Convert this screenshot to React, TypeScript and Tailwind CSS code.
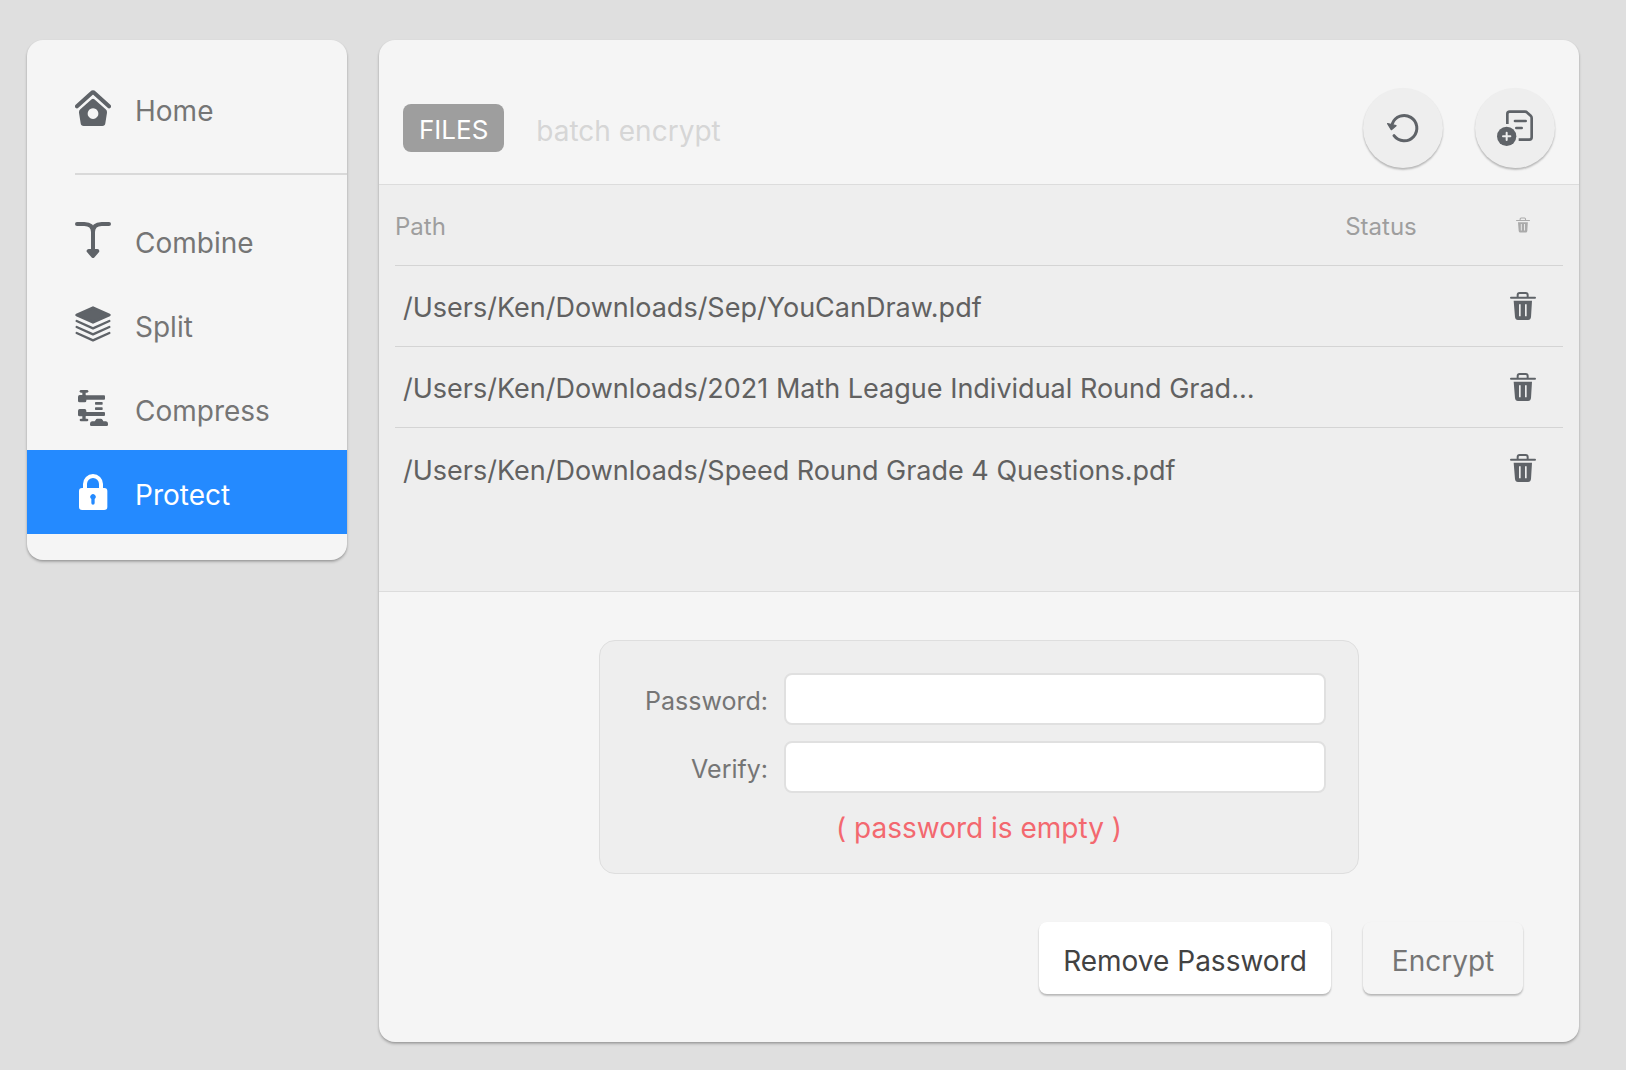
import React, { useState } from 'react';

type IconProps = { className?: string };

const HomeIcon: React.FC<IconProps> = ({ className }) => (
  <svg viewBox="0 0 108 108" className={className} fill="currentColor" aria-hidden="true">
    <path d="M6 49 L50 9 Q54 5 58 9 L102 49" fill="none" stroke="currentColor" strokeWidth="12" strokeLinecap="round" />
    <path fillRule="evenodd" d="M50 28 Q54 24 58 28 L92 58 Q97 62 96 68 L91 100 Q90 108 82 108 H26 Q18 108 17 100 L12 68 Q11 62 16 58 Z M54 55 a16 16 0 1 0 0.1 0 Z" />
  </svg>
);

const CombineIcon: React.FC<IconProps> = ({ className }) => (
  <svg viewBox="0 0 108 108" className={className} fill="none" stroke="currentColor" strokeLinecap="round" strokeLinejoin="round" aria-hidden="true">
    <path d="M6 6 H28 C44 6 54 14 54 30 V86 M102 6 H80 C64 6 54 14 54 30" strokeWidth="12" />
    <path d="M41 87 H67 L54 102 Z" fill="currentColor" strokeWidth="12" />
  </svg>
);

const SplitIcon: React.FC<IconProps> = ({ className }) => (
  <svg viewBox="0 0 108 108" className={className} fill="none" stroke="currentColor" strokeLinecap="round" strokeLinejoin="round" aria-hidden="true">
    <path d="M54 5 L103 27 L54 49 L5 27 Z" fill="currentColor" strokeWidth="8" />
    <path d="M5 45 L54 67 L103 45 M5 63 L54 85 L103 63 M5 81 L54 103 L103 81" strokeWidth="7" />
  </svg>
);

const CompressIcon: React.FC<IconProps> = ({ className }) => (
  <svg viewBox="0 0 108 108" className={className} fill="currentColor" aria-hidden="true">
    <rect x="14" y="0" width="26" height="8" rx="4" />
    <rect x="22" y="4" width="10" height="16" />
    <rect x="9" y="15" width="25" height="22" rx="5" />
    <rect x="26" y="16" width="64" height="13" rx="3" />
    <rect x="60" y="36" width="23" height="8" rx="2" />
    <rect x="60" y="52" width="23" height="8" rx="2" />
    <rect x="9" y="57" width="25" height="22" rx="5" />
    <rect x="26" y="66" width="64" height="12" rx="3" />
    <rect x="22" y="76" width="10" height="14" />
    <rect x="14" y="86" width="26" height="8" rx="4" />
    <path d="M62 90 Q63 86 67 86 H77 Q81 86 83 90 L85 94 H93 Q99 95 99 101 V104 Q99 108 95 108 H49 Q45 108 45 104 V101 Q45 95 51 94 H59 Z" />
  </svg>
);

const LockIcon: React.FC<IconProps> = ({ className }) => (
  <svg viewBox="0 0 108 108" className={className} fill="currentColor" aria-hidden="true">
    <path d="M30 46 V30 A24 24 0 0 1 78 30 V46" fill="none" stroke="currentColor" strokeWidth="12" />
    <path fillRule="evenodd" d="M21 42 H88 Q97 42 97 51 V99 Q97 108 88 108 H21 Q12 108 12 99 V51 Q12 42 21 42 Z M49 75 V87 Q49 92 54 92 Q59 92 59 87 V75 A8 8 0 1 0 49 75 Z" />
  </svg>
);

const ResetIcon: React.FC<IconProps> = ({ className }) => (
  <svg viewBox="0 0 108 108" className={className} fill="none" stroke="currentColor" aria-hidden="true">
    <path d="M22 41 A38 38 0 1 1 27 77" strokeWidth="9" strokeLinecap="round" />
    <path d="M8 41 L33 47 L19 59 Z" fill="currentColor" strokeWidth="4" strokeLinejoin="round" />
  </svg>
);

const AddFileIcon: React.FC<IconProps> = ({ className }) => (
  <svg viewBox="0 0 108 108" className={className} fill="none" stroke="currentColor" strokeWidth="8" aria-hidden="true">
    <path d="M31 42 V12 Q31 5 38 5 H84 Q88 5 91 8 L101 17 Q104 20 104 24 V82 Q104 89 97 89 H65" />
    <path d="M54 33 H86 M58 54 H74" strokeLinecap="round" />
    <circle cx="29" cy="79" r="29" fill="currentColor" stroke="none" />
    <path d="M18 79 H40 M29 68 V90" stroke="#eeeeee" strokeWidth="6" strokeLinecap="round" />
  </svg>
);

const TrashIcon: React.FC<IconProps> = ({ className }) => (
  <svg viewBox="0 0 78 84" className={className} fill="currentColor" aria-hidden="true">
    <path d="M23 17 V9 Q23 3 29 3 H47 Q53 3 53 9 V17 M3 17 H75" fill="none" stroke="currentColor" strokeWidth="6" strokeLinecap="round" />
    <path fillRule="evenodd" d="M11 26 H66 L63 75 Q62 84 54 84 H24 Q16 84 15 75 Z M27 37 V73 H32 V37 Z M45 37 V73 H50 V37 Z" />
  </svg>
);

const tools = [
  { name: 'Combine', icon: CombineIcon },
  { name: 'Split', icon: SplitIcon },
  { name: 'Compress', icon: CompressIcon },
  { name: 'Protect', icon: LockIcon },
];

const initialFiles = [
  '/Users/Ken/Downloads/Sep/YouCanDraw.pdf',
  '/Users/Ken/Downloads/2021 Math League Individual Round Grad…',
  '/Users/Ken/Downloads/Speed Round Grade 4 Questions.pdf',
];

const Sidebar: React.FC<{ active: string; onSelect: (name: string) => void }> = ({ active, onSelect }) => {
  const item = (name: string, Icon: React.FC<IconProps>) => (
    <button
      key={name}
      type="button"
      onClick={() => onSelect(name)}
      className={
        name === active
          ? 'flex h-21 w-full items-center gap-6 bg-[#248aff] pl-12 text-left text-white'
          : 'flex h-21 w-full items-center gap-6 pl-12 text-left text-[#5f6368]'
      }
    >
      <Icon className="size-9" />
      <span className={name === active ? 'pt-1.5' : 'pt-1.5 text-[#757575]'}>{name}</span>
    </button>
  );

  return (
    <nav className="w-80 shrink-0 overflow-hidden rounded-2xl bg-[#f5f5f5] py-[26px] text-[28px] shadow-[0_2px_3px_rgba(0,0,0,0.22),0_1px_2px_rgba(0,0,0,0.12)]">
      {item('Home', HomeIcon)}
      <hr className="my-[23px] ml-12 border-t-2 border-[#d9d9d9]" />
      {tools.map((tool) => item(tool.name, tool.icon))}
    </nav>
  );
};

const App: React.FC = () => {
  const [active, setActive] = useState('Protect');
  const [files, setFiles] = useState(initialFiles);
  const [password, setPassword] = useState('');
  const [verify, setVerify] = useState('');

  let message = '';
  if (!password) message = '( password is empty )';
  else if (password !== verify) message = '( passwords do not match )';

  return (
    <div className="flex min-h-screen items-start gap-8 bg-[#dfdfdf] pt-10 pr-[47px] pb-7 pl-[27px] font-['Inter','Liberation_Sans',sans-serif]">
      <Sidebar active={active} onSelect={setActive} />

      <main className="min-w-0 flex-1 rounded-2xl bg-[#f5f5f5] shadow-[0_2px_3px_rgba(0,0,0,0.22),0_1px_2px_rgba(0,0,0,0.12)]">
        {/* Title bar */}
        <header className="flex items-center px-6 pt-12 pb-4">
          <h1 className="flex h-12 items-center rounded-lg bg-[#9e9e9e] px-4 pt-0.5 text-[26px] text-white">FILES</h1>
          <p className="ml-8 pt-1.5 text-[28px] text-[#d6d6d6]">batch encrypt</p>
          <div className="ml-auto flex gap-8 text-[#5f6368]">
            <button
              type="button"
              aria-label="Reset"
              onClick={() => setFiles(initialFiles)}
              className="flex size-20 items-center justify-center rounded-full bg-[#eeeeee] shadow-[0_2px_2px_rgba(0,0,0,0.2),0_1px_2px_rgba(0,0,0,0.08)]"
            >
              <ResetIcon className="size-9" />
            </button>
            <button
              type="button"
              aria-label="Add files"
              className="flex size-20 items-center justify-center rounded-full bg-[#eeeeee] shadow-[0_2px_2px_rgba(0,0,0,0.2),0_1px_2px_rgba(0,0,0,0.08)]"
            >
              <AddFileIcon className="size-9" />
            </button>
          </div>
        </header>

        {/* File list */}
        <section className="min-h-[408px] border-y border-[#dcdcdc] bg-[#eeeeee] px-4">
          <table className="w-full table-fixed border-collapse">
            <thead>
              <tr className="h-20 border-b border-[#d4d4d4] text-2xl text-[#9e9e9e]">
                <th scope="col" className="pt-1 text-left font-normal">Path</th>
                <th scope="col" className="w-[204px] pt-1 text-center font-normal">Status</th>
                <th scope="col" className="w-20">
                  <button type="button" aria-label="Remove all" onClick={() => setFiles([])} className="block w-full text-[#aaaaaa]">
                    <TrashIcon className="mx-auto h-4 w-[14px]" />
                  </button>
                </th>
              </tr>
            </thead>
            <tbody>
              {files.map((file) => (
                <tr key={file} className="h-[81px] border-b border-[#d4d4d4] last:border-b-0">
                  <td className="truncate pt-1.5 pl-2 text-[27px] text-[#616161]">{file}</td>
                  <td />
                  <td>
                    <button
                      type="button"
                      aria-label={`Remove ${file}`}
                      onClick={() => setFiles(files.filter((f) => f !== file))}
                      className="block w-full text-[#5f6368]"
                    >
                      <TrashIcon className="mx-auto h-7 w-[26px]" />
                    </button>
                  </td>
                </tr>
              ))}
            </tbody>
          </table>
        </section>

        {/* Password form */}
        <form className="px-14 pt-12 pb-12" onSubmit={(e) => e.preventDefault()}>
          <div className="mx-auto max-w-[760px] rounded-2xl border border-[#dedede] bg-[#eeeeee] px-8 pt-8 pb-6">
            <div className="grid grid-cols-[136px_1fr] items-center gap-4 text-[25px] text-[#757575]">
              <label htmlFor="password" className="pt-1.5 text-right">Password:</label>
              <input
                id="password"
                type="password"
                value={password}
                onChange={(e) => setPassword(e.target.value)}
                className="h-13 w-full rounded-lg border-2 border-[#e0e0e0] bg-white px-3"
              />
              <label htmlFor="verify" className="pt-1.5 text-right">Verify:</label>
              <input
                id="verify"
                type="password"
                value={verify}
                onChange={(e) => setVerify(e.target.value)}
                className="h-13 w-full rounded-lg border-2 border-[#e0e0e0] bg-white px-3"
              />
            </div>
            <p className="mt-3 h-11 text-center text-[28px] leading-[46px] text-[#f3686f]">{message}</p>
          </div>

          <div className="mt-12 flex justify-end gap-8 text-[28px]">
            <button
              type="button"
              className="h-18 w-[292px] rounded-lg bg-white pt-1.5 text-[#424242] shadow-[0_2px_2px_rgba(0,0,0,0.2),0_1px_2px_rgba(0,0,0,0.08)]"
            >
              Remove Password
            </button>
            <button
              type="submit"
              className="h-18 w-40 rounded-lg bg-[#f5f5f5] pt-1.5 text-[#757575] shadow-[0_2px_2px_rgba(0,0,0,0.2),0_1px_2px_rgba(0,0,0,0.08)]"
            >
              Encrypt
            </button>
          </div>
        </form>
      </main>
    </div>
  );
};

export default App;
